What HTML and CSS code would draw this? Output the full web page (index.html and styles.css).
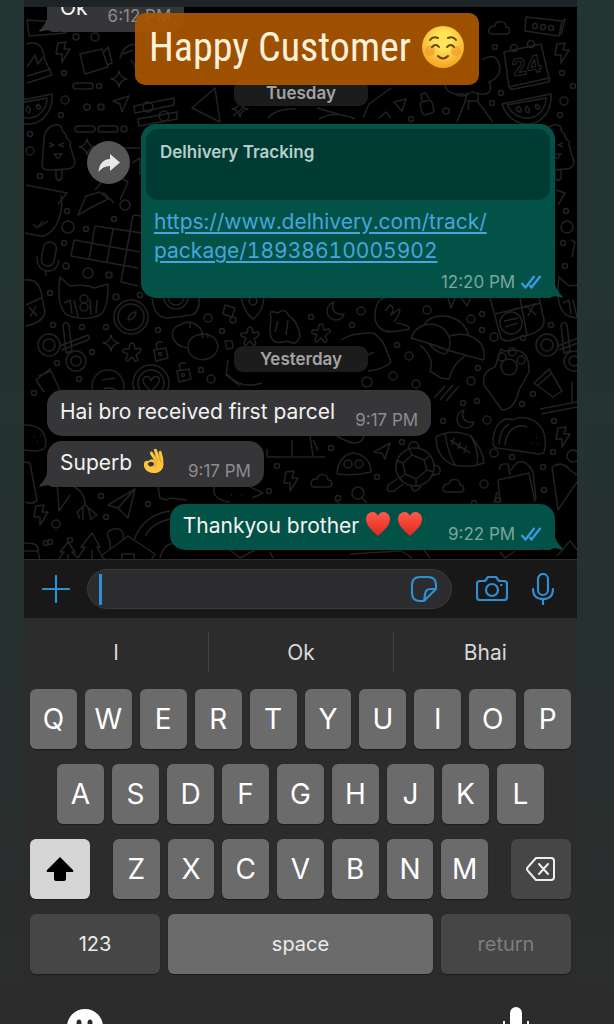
FILE: index.html
```html
<!DOCTYPE html>
<html lang="en">

<head>
    <meta charset="UTF-8">
    <meta name="viewport" content="width=device-width, initial-scale=1.0">
    <title>Happy Customer</title>
    <link rel="stylesheet" href="styles.css">
</head>

<body>
    <!-- shared icons -->
    <svg class="defs" aria-hidden="true">
        <symbol id="ticks" viewBox="0 0 22 16">
            <path d="M1.5 9 L5.5 13.5 L14.5 2 M9.5 11 L11.5 13.5 L20.5 2" fill="none" stroke="#3c9be0" stroke-width="2.2" />
        </symbol>
        <symbol id="heart" viewBox="0 0 26 26">
            <path d="M13 25 C8 20 1 15 1 8 C1 4 4 1 7.500 1 C10 1 12 2.500 13 5 C14 2.500 16 1 18.500 1 C22 1 25 4 25 8 C25 15 18 20 13 25 Z" fill="url(#heartFill)" />
        </symbol>
        <symbol id="tail-in" viewBox="0 0 20 20">
            <path d="M8 0 V7 Q6 13 0 19 Q1 20 4 19 Q10 17 13 20 H20 V0 Z" fill="#363638" />
        </symbol>
        <symbol id="tail-out" viewBox="0 0 20 20">
            <path d="M12 0 V7 Q14 13 20 19 Q19 20 16 19 Q10 17 7 20 H0 V0 Z" fill="#035247" />
        </symbol>
        <linearGradient id="heartFill" x1="0" y1="0" x2="0" y2="1">
            <stop offset="0" stop-color="#ff5a4a" />
            <stop offset="1" stop-color="#e3261d" />
        </linearGradient>
        <radialGradient id="smileFill" cx="0.5" cy="0.35" r="0.65">
            <stop offset="0.3" stop-color="#ffe35a" />
            <stop offset="1" stop-color="#f5a31c" />
        </radialGradient>

        <!-- wallpaper doodles -->
        <g id="bolt"><path d="M-5 -9 L3 -10 L1 -3 L7 -3 L-1 10 L-1 2 L-7 2 Z" /></g>
        <g id="star"><path d="M0 -8 Q1 -1 8 0 Q1 1 0 8 Q-1 1 -8 0 Q-1 -1 0 -8 Z" /></g>
        <g id="plane"><path d="M-8 -3 L8 -8 L1 8 L-1 0 Z" /></g>
        <g id="cloud"><path d="M-7 6 H7 C12 6 12 -1 7 -1 C7 -8 -3 -8 -4 -2 C-11 -3 -12 6 -7 6 Z" /></g>
        <g id="moon"><path d="M-1 -9 C-12 -5 -9 9 1 9 C6 9 8 6 9 3 C1 5 -5 -1 -1 -9 Z" /></g>
        <g id="flower"><path d="M-2 -9 Q0 -11 2 -9 L3 -4 L8 -5 Q10 -3 8 -1 L4 2 L6 7 Q5 9 3 8 L0 4 L-4 8 Q-6 8 -6 6 L-4 1 L-9 -1 Q-10 -4 -7 -4 L-3 -4 Z" /></g>
        <g id="lock"><path d="M-6 -2 L6 -4 L8 6 L-4 9 Z M-3 -3 L-4 -8 Q-1 -12 3 -9" /><circle cy="2" r="1.500" /></g>
        <g id="melon"><path d="M-25 -3 L24 -13 C25 4 15 16 2 17 C-11 18 -21 9 -25 -3 Z M-20 -2 L19 -9 C19 2 11 10 2 11 C-8 12 -16 6 -20 -2 Z M-10 0 q5 -1 4 5 q-6 0 -4 -5 M0 -1 q4 4 1 7 q-5 -3 -1 -7 M9 -3 q5 3 3 5 q-5 0 -3 -5" /></g>
        <g id="popsicle"><path d="M-16 15 L-14 -12 C-12 -26 2 -28 4 -22 C3 -17 9 -18 8 -13 C10 -9 14 -10 12 -5 L17 12 Q16 19 9 19 L-9 20 Q-16 20 -16 15 Z M-2 20 V28 Q1 33 4 28 V19 M-9 -7 L-4 -5 L-9 -3 M6 -7 L1 -5 L6 -3 M-5 4 H5 M-3 4 Q0 13 3 4" /></g>
        <g id="cal"><path d="M-22 -14 L15 -22 L23 12 L-17 21 Z M-17 21 Q-15 24 -12 23 L22 16 Q25 15 23 12" /><circle cx="-12" cy="-18" r="3.500" /><circle cx="5" cy="-22" r="3.500" /></g>
        <g id="cat"><path d="M-24 -23 L-14 -14 Q2 -16 10 -12 L24 -16 Q24 10 16 15 Q0 22 -17 15 Q-28 6 -24 -23 Z M-20 3 L-14 0 L-12 14 M-10 0 L-6 17 M6 -1 L7 15 M13 0 L12 14" /><circle cy="-1" r="4" /><circle cy="7" r="4" /></g>
        <g id="guitar"><circle cx="-14" cy="0" r="6" /><circle cx="-14" cy="0" r="11" /><circle cx="13" cy="16" r="5" /><circle cx="13" cy="16" r="10" /><path d="M-3 1 L25 -10 Q28 -8 25 -5 L-2 5 M0 -20 Q3 -25 6 -20 L9 6 L3 8 Z" /></g>
        <g id="mic"><rect x="-7" y="-14" width="13" height="24" rx="6" transform="rotate(10)" /><path d="M-12 0 Q-12 14 -2 15 Q8 16 10 4 M-3 15 V20" /></g>
        <g id="dots"><circle r="4" /><circle cx="14" cy="16" r="2.500" /><circle cx="-10" cy="19" r="2.500" /></g>
        <g id="trees"><path d="M-22 16 L-16 8 H-20 L-12 -2 L-5 8 H-8 L-2 14 M-2 14 L5 3 H1 L12 -11 L20 3 H17 L23 14 M-12 10 V18 M12 6 V18" /></g>
        <g id="taco"><path d="M-26 8 C-26 -12 -14 -19 -6 -15 C0 -20 14 -17 20 -10 C26 -5 28 8 25 17 Q24 19 20 19 L-22 13 Q-26 12 -26 8 Z M-14 10 C-13 -5 -2 -12 8 -8 M-20 9 C-19 -4 -14 -9 -10 -11 M17 3 h1 M12 8 h1 M18 9 h1" /></g>
    </svg>

    <header class="topbar"></header>

    <main class="chat">
        <svg class="wallpaper" viewBox="24 7 553 552" preserveAspectRatio="xMidYMin slice" aria-hidden="true">
            <!-- upper left -->
            <path d="M27 20 L60 22 L66 33 L29 36 Z M26 44 Q40 40 43 52 L45 60 L52 75 L27 83 M27 67 L35 55 L38 64 L43 57 M27 76 L51 69" />
            <use href="#bolt" x="63" y="52" />
            <path d="M80 54 L102 49 L108 67 L85 74 Z M104 52 L108 47 L112 63 L107 65" />
            <use href="#star" x="119" y="79" />
            <rect x="73" y="83" width="20" height="6" rx="3" />
            <use href="#plane" x="121" y="104" />
            <path d="M134 106 L174 98 V105 L135 113 Z M138 119 L177 112 V119 L139 126 Z" />
            <circle cx="148" cy="107" r="5" /><circle cx="164" cy="116" r="5" />
            <use href="#melon" x="28" y="107" />
            <rect x="75" y="126" width="20" height="6" rx="3" />
            <rect x="98" y="126" width="20" height="6" rx="3" />
            <use href="#popsicle" x="58" y="150" />
            <use href="#star" x="87" y="147" />
            <circle cx="95" cy="37" r="4" /><circle cx="65" cy="100" r="4" /><circle cx="61" cy="115" r="2.500" />
            <circle cx="76" cy="37" r="3" /><circle cx="99" cy="86" r="2.500" /><circle cx="87" cy="107" r="3" /><circle cx="101" cy="107" r="3" /><circle cx="124" cy="129" r="3" /><circle cx="64" cy="73" r="2.500" /><circle cx="30" cy="134" r="2.500" /><circle cx="30" cy="151" r="4" /><circle cx="40" cy="176" r="2.500" />
            <path d="M108 148 H140 M132 163 L140 158 V175 M95 190 L110 172 L128 182 L120 200 M26 185 L67 193 L58 204 M61 195 C65 220 50 238 40 236 L25 233 M33 224 L37 228 L43 221 M39 227 L48 221" />
            <path d="M78 215 L86 196 L100 192 L108 199 L90 208 Z M78 215 L90 208 M103 192 L114 203" />
            <circle cx="125" cy="205" r="5" /><circle cx="68" cy="227" r="6" /><circle cx="67" cy="211" r="2.500" /><circle cx="86" cy="229" r="2.500" /><circle cx="64" cy="243" r="2.500" /><circle cx="114" cy="219" r="2.500" />
            <!-- crossword -->
            <path d="M95 226 L142 233 M74 240 L140 252 M71 256 L138 268 M74 240 L71 256 M95 226 L89 259 M113 229 L107 262 M133 215 L121 282 L138 286 M134 215 L142 216" />
            <use href="#mic" x="49" y="256" />
            <use href="#cat" x="84" y="300" />
            <circle cx="131" cy="317" r="17" /><circle cx="131" cy="317" r="13" />
            <path d="M128 320 Q129 312 136 312 Q136 319 128 320 M24 280 Q38 278 41 292 L45 312 Q43 323 25 326 M26 305 L41 298 M29 307 L37 316 M36 306 L30 317" />
            <circle cx="88" cy="273" r="5" /><circle cx="109" cy="275" r="3" /><circle cx="66" cy="266" r="3" /><circle cx="50" cy="293" r="2.500" /><circle cx="116" cy="297" r="3" /><circle cx="140" cy="295" r="2.500" />
            <use href="#guitar" x="63" y="345" />
            <use href="#star" x="111" y="343" /><use href="#flower" x="132" y="353" /><use href="#lock" x="160" y="352" />
            <path d="M152 298 Q154 318 168 318 L192 315 Q200 312 199 298" /><circle cx="176" cy="297" r="12" /><circle cx="176" cy="297" r="8" />
            <path d="M187 348 C170 345 168 328 180 325 Q190 318 200 328 L203 334 M188 347 C187 332 215 328 218 346 C216 365 188 363 188 347 M201 333 L203 338 M207 333 L208 338 M190 323 V328" />
            <circle cx="151" cy="383" r="18" /><circle cx="151" cy="383" r="13" /><path d="M151 391 Q139 381 145 377 Q150 375 151 381 Q154 374 159 378 Q161 383 151 391" />
            <circle cx="108" cy="386" r="16" /><path d="M102 380 L115 378 M104 389 Q110 386 118 391 M36 380 L50 369 L60 390 M36 380 L44 392 M39 376 L51 371" />
            <use href="#lock" x="183" y="373" />
            <circle cx="53" cy="325" r="2.500" /><circle cx="106" cy="327" r="2.500" /><circle cx="158" cy="330" r="2.500" /><circle cx="82" cy="327" r="2.500" /><circle cx="92" cy="352" r="2.500" /><circle cx="57" cy="363" r="2.500" /><circle cx="79" cy="379" r="2.500" /><circle cx="201" cy="370" r="2.500" /><circle cx="211" cy="379" r="4" /><circle cx="208" cy="318" r="4" /><circle cx="222" cy="331" r="2.500" /><circle cx="34" cy="393" r="2.500" />
            <!-- centre -->
            <path d="M225 305 L235 308 L232 317 L223 314 Z M225 341 L232 341 L233 348 L227 349 Z M241 297 Q244 312 253 319 Q263 312 264 297" /><circle cx="253" cy="301" r="4" /><circle cx="233" cy="320" r="3" />
            <use href="#flower" x="250" y="337" />
            <path d="M271 317 Q268 309 278 313 Q285 307 289 316 Q297 320 300 335 Q298 347 287 341 Q270 347 270 330 Z M278 321 L275 332 M288 320 L286 335 M228 360 L226 375 L240 386 M227 374 Q240 390 262 383" />
            <use href="#moon" x="335" y="311" /><use href="#flower" x="321" y="334" />
            <path d="M341 340 Q352 332 374 333 L383 342 L391 362 Q385 369 368 371 M365 356 L374 352" />
            <path d="M385 298 Q374 300 375 320 Q380 335 398 331 L409 329 Q410 325 396 323 M385 311 L390 305 Q396 308 391 315 L399 309 Q402 311 394 322" />
            <path d="M450 351 Q430 343 411 338 Q416 324 433 324 Q449 328 450 342 Q450 350 446 353 M424 325 Q430 315 444 316 Q464 318 469 336 M450 336 Q470 330 482 345 Q486 358 483 360 L447 350 M420 345 Q435 358 430 371 L441 378 L449 379 Q452 365 466 355 M429 344 Q438 354 446 354" />
            <path d="M490 298 L501 338 Q505 344 520 337 Q545 332 544 320 L539 298 M520 298 L527 335 M495 314 L541 303 M525 305 L536 315 M535 303 L528 316" /><circle cx="511" cy="323" r="11" /><path d="M504 321 L518 318 M505 327 L518 323 M448 298 L451 308 L455 298 M461 297 L467 306 L471 297" />
            <path d="M484 385 Q481 372 495 367 L501 349 Q505 353 513 350 Q530 350 529 372 L519 390 Q515 410 502 410 L484 385" /><circle cx="509" cy="367" r="8" /><circle cx="502" cy="357" r="4" /><circle cx="512" cy="352" r="4" /><circle cx="521" cy="360" r="4" />
            <path d="M534 383 L549 369 L562 391 L553 397 Z M537 386 L551 374 M434 398 L445 386 M440 400 L453 385 M446 401 L459 386" />
            <use href="#guitar" x="561" y="345" />
            <use href="#cat" x="583" y="300" />
            <circle cx="361" cy="311" r="4" /><circle cx="352" cy="325" r="2.500" /><circle cx="311" cy="317" r="2.500" /><circle cx="427" cy="310" r="4" /><circle cx="471" cy="319" r="4" /><circle cx="482" cy="314" r="2.500" /><circle cx="482" cy="330" r="2.500" /><circle cx="494" cy="337" r="4" /><circle cx="523" cy="338" r="2.500" /><circle cx="551" cy="325" r="2.500" /><circle cx="409" cy="356" r="4" /><circle cx="397" cy="345" r="2.500" /><circle cx="478" cy="368" r="2.500" /><circle cx="471" cy="381" r="4" /><circle cx="393" cy="376" r="4" /><circle cx="367" cy="382" r="5" /><circle cx="416" cy="384" r="4" /><circle cx="533" cy="394" r="2.500" />
            <!-- upper right -->
            <path d="M157 28 L175 20 M145 45 Q160 30 175 48 M120 58 Q125 42 137 45 M123 54 L133 50 M131 60 Q137 66 136 78 M188 20 Q192 34 205 30 Q215 22 212 18 M235 98 L243 108 L233 116 M192 108 L215 88 L220 122 Z M268 118 Q276 108 296 109" />
            <path d="M320 15 Q328 30 342 22 M350 18 L358 26 M137 70 H175 M138 76 H176" />
            <use href="#star" x="240" y="109" /><use href="#cloud" x="499" y="28" />
            <path d="M526 17 L562 21 L559 36 L525 31 Z M562 21 L565 19 L561 35" /><circle cx="535" cy="26" r="2.500" /><circle cx="543" cy="27" r="2.500" /><circle cx="551" cy="28" r="2.500" />
            <use href="#cal" x="526" y="66" /><text class="day" x="512" y="74" transform="rotate(-10 526 66)">24</text>
            <use href="#bolt" x="562" y="53" />
            <path d="M482 60 Q497 50 500 68 Q500 78 489 82 Q495 95 480 94 L472 92 Q462 99 455 94 M445 85 Q446 95 465 94 M467 92 L465 102 L457 122 M478 93 V102 L493 122 M467 101 H478 M469 101 L468 110 M394 102 L406 99 L402 111 Z" />
            <rect x="421" y="101" width="12" height="13" rx="3" transform="rotate(-15 427 107)" /><path d="M422 101 L421 94 L426 93 L429 99" />
            <use href="#melon" x="527" y="107" /><use href="#popsicle" x="557" y="150" />
            <path d="M363 118 L369 104 L391 88 M379 118 L386 112 L391 118 M317 108 L345 116 M319 119 Q335 110 355 119 M556 190 L565 193 L558 205 M571 240 L575 242 L572 257" />
            <circle cx="495" cy="47" r="2.500" /><circle cx="562" cy="73" r="2.500" /><circle cx="573" cy="86" r="2.500" /><circle cx="501" cy="93" r="2.500" /><circle cx="492" cy="103" r="2.500" /><circle cx="564" cy="101" r="4" /><circle cx="560" cy="115" r="2.500" /><circle cx="446" cy="111" r="3" /><circle cx="411" cy="119" r="2.500" /><circle cx="566" cy="211" r="2.500" /><circle cx="567" cy="227" r="6" /><circle cx="563" cy="243" r="2.500" /><circle cx="565" cy="266" r="2.500" />
            <!-- bottom -->
            <use href="#moon" x="465" y="419" /><use href="#taco" x="519" y="435" /><use href="#bolt" x="563" y="437" />
            <path d="M436 437 Q452 428 471 436 Q484 452 484 463 Q468 469 451 464 Q436 456 436 437 M445 433 Q448 455 456 466 M470 435 Q480 450 477 465 M450 440 L470 453 M454 438 L452 445 M460 442 L458 449 M466 446 L464 453 M374 452 L390 443 L385 459 L382 453 Z" />
            <circle cx="415" cy="467" r="19" /><path d="M403 463 L412 455 L424 460 L427 470 L416 479 L405 474 Z M412 455 L409 449 M424 460 L431 455 M427 470 L434 472 M416 479 V486 M405 474 L399 479 M403 463 L396 460 M408 449 Q410 439 417 443 L420 449 M397 479 L388 485 Q385 493 394 491 L403 484 M433 465 Q443 466 439 474 L433 475 M411 486 Q414 496 421 486" />
            <path d="M337 474 Q338 456 353 453 Q370 455 371 472 Q355 476 337 474" /><circle cx="348" cy="464" r="4" /><circle cx="359" cy="464" r="4" />
            <use href="#cloud" x="321" y="481" /><use href="#cloud" x="453" y="486" />
            <path d="M498 480 L500 502 M498 480 L529 473 L535 502 M500 470 Q498 463 508 464 L510 475 M511 470 Q520 455 530 467 L533 472 L536 500 M552 467 Q562 460 570 470 L577 475 M552 467 L558 510 L577 482 M497 492 L494 503" />
            <path d="M540 409 L577 402 M541 414 L577 407 M572 382 V402" />
            <path d="M24 425 Q45 424 46 443 Q47 450 36 451 L24 450 M34 437 h1 M40 435 h1 M37 442 h1 M24 462 L30 463 L37 500 Q34 505 25 502" />
            <use href="#bolt" x="41" y="515" />
            <path d="M57 480 L59 511 L70 495 M64 484 Q85 487 85 505 L97 515 L90 520 M85 505 L77 512 L80 519 M83 508 V520 M88 508 L91 519 M108 505 L135 489 L128 518 L118 508 Z M118 508 L134 490 M158 487 L160 498 L167 500 L170 498 L187 500 M214 487 Q212 500 230 502 M231 495 h1 M241 495 h1 M250 487 L263 493 L252 498" />
            <use href="#trees" x="80" y="544" />
            <path d="M101 556 L128 536 L155 554 L151 560 M110 549 V541 Q104 532 113 529 Q125 527 123 539 M101 556 L106 560 M134 540 Q143 515 170 511 M145 536 Q152 523 170 519 M122 560 V554 H134 V560 M24 543 Q40 542 38 552 L40 560 M24 551 H38 M160 558 Q165 538 182 546" />
            <path d="M230 550 L240 558 L255 550 M270 552 L273 558 M350 554 L400 551 M400 550 L412 558 M424 550 L430 558 M500 552 L505 558 L515 551 M557 556 L570 541 L577 550 M335 500 L352 514" /><circle cx="358" cy="493" r="6" /><path d="M362 498 L367 503 M266 457 H325 M267 449 V456 M292 440 V456 M310 436 L313 456 M313 440 L318 450 M337 436 Q360 450 364 436" />
            <use href="#bolt" x="291" y="481" /><use href="#dots" x="56" y="524" /><use href="#dots" x="484" y="484" /><circle cx="494" cy="453" r="4" />
            <circle cx="443" cy="421" r="2.500" /><circle cx="487" cy="420" r="4" /><circle cx="463" cy="403" r="2.500" /><circle cx="477" cy="401" r="2.500" /><circle cx="522" cy="404" r="2.500" /><circle cx="554" cy="421" r="2.500" /><circle cx="553" cy="452" r="2.500" /><circle cx="573" cy="456" r="6" /><circle cx="512" cy="457" r="2.500" /><circle cx="543" cy="467" r="2.500" /><circle cx="544" cy="490" r="2.500" /><circle cx="377" cy="477" r="2.500" /><circle cx="402" cy="442" r="2.500" /><circle cx="331" cy="448" r="2.500" /><circle cx="338" cy="498" r="2.500" /><circle cx="277" cy="466" r="2.500" /><circle cx="148" cy="504" r="2.500" /><circle cx="106" cy="517" r="2.500" /><circle cx="101" cy="496" r="2.500" /><circle cx="50" cy="542" r="2.500" /><circle cx="269" cy="491" r="2.500" />
        </svg>

        <div class="row in first">
            <div class="bubble">
                <svg class="tail"><use href="#tail-in" /></svg>
                <p>Ok</p>
                <time>6:12 PM</time>
            </div>
        </div>

        <div class="date">Tuesday</div>

        <div class="row out">
            <button class="forward" aria-label="Forward">
                <svg viewBox="0 0 24 24"><path d="M13 3 L23 11.500 L13 20 V15 C8 15 4.500 17 1.500 21 C2 13 6 8.500 13 8 Z" fill="#e6e6e6" /></svg>
            </button>
            <div class="bubble link-bubble">
                <svg class="tail"><use href="#tail-out" /></svg>
                <div class="preview">Delhivery Tracking</div>
                <a href="https://www.delhivery.com/track/package/18938610005902">https://www.delhivery.com/track/<wbr>package/18938610005902</a>
                <time>12:20 PM <svg class="ticks"><use href="#ticks" /></svg></time>
            </div>
        </div>

        <div class="date">Yesterday</div>

        <div class="row in">
            <div class="bubble">
                <p>Hai bro received first parcel</p>
                <time>9:17 PM</time>
            </div>
        </div>
        <div class="row in">
            <div class="bubble">
                <svg class="tail"><use href="#tail-in" /></svg>
                <p>Superb
                    <svg class="emoji hand" viewBox="0 0 26 28" role="img" aria-label="OK hand">
                        <path d="M6 14 C3 13 1 15 1 18 C1 23 6 27 12 27 C19 27 23 22 22 15 C22 11 21 8 20 4 C19 2 17 3 17 5 L18 10 L15 2 C14 0 11 1 12 3 L14 10 L10 4 C8 3 7 5 8 7 L12 13 C9 11 8 13 6 14 Z" fill="#fbc63c" />
                        <path d="M5 17 C7 14 11 14 12 17 C12 20 7 22 5 17 Z" fill="#363638" />
                        <path d="M12 13 C15 14 15 19 12 21 M14 10 L16 14 M18 10 L19 15" fill="none" stroke="#d98f1e" stroke-width="1" />
                    </svg>
                </p>
                <time>9:17 PM</time>
            </div>
        </div>
        <div class="row out last">
            <div class="bubble">
                <svg class="tail"><use href="#tail-out" /></svg>
                <p>Thankyou brother
                    <svg class="emoji" role="img" aria-label="red heart"><use href="#heart" /></svg>
                    <svg class="emoji" role="img" aria-label="red heart"><use href="#heart" /></svg>
                </p>
                <time>9:22 PM <svg class="ticks"><use href="#ticks" /></svg></time>
            </div>
        </div>
    </main>

    <!-- story caption -->
    <h1 class="banner">
        Happy Customer
        <svg viewBox="0 0 44 44" role="img" aria-label="smiling face">
            <circle cx="22" cy="22" r="21" fill="url(#smileFill)" />
            <circle cx="9" cy="26" r="5" fill="#f58a2a" opacity="0.5" />
            <circle cx="35" cy="26" r="5" fill="#f58a2a" opacity="0.5" />
            <path d="M9 15 Q12 11 17 13 M27 13 Q32 11 35 15 M11 22 Q15 18 18 22 M26 22 Q30 18 33 22 M17 31 Q22 36 27 31" fill="none" stroke="#6b4209" stroke-width="2" stroke-linecap="round" />
        </svg>
    </h1>

    <form class="composer">
        <button type="button" class="icon" aria-label="Attach">
            <svg viewBox="0 0 28 28"><path d="M14 1 V27 M1 14 H27" /></svg>
        </button>
        <div class="field">
            <span class="caret"></span>
            <input type="text" aria-label="Message">
            <button type="button" class="icon" aria-label="Stickers">
                <svg viewBox="0 0 28 28"><path d="M10 2 H18 Q26 2 26 10 V14 L14 26 H10 Q2 26 2 18 V10 Q2 2 10 2 Z M26 14 H21 Q15 14 15 20 L14 26" /></svg>
            </button>
        </div>
        <button type="button" class="icon camera" aria-label="Camera">
            <svg viewBox="0 0 32 28"><path d="M4 6 H9 L12 2 H20 L23 6 H28 Q31 6 31 9 V22 Q31 25 28 25 H4 Q1 25 1 22 V9 Q1 6 4 6 Z" /><circle cx="16" cy="15" r="6" /><path d="M25 10 H25.500" /></svg>
        </button>
        <button type="button" class="icon voice" aria-label="Voice message">
            <svg viewBox="0 0 22 32"><rect x="6" y="1" width="10" height="21" rx="5" /><path d="M1 16 Q1 26 11 26 Q21 26 21 16 M11 26 V31" /></svg>
        </button>
    </form>

    <section class="keyboard">
        <div class="suggestions">
            <button>I</button>
            <button>Ok</button>
            <button>Bhai</button>
        </div>
        <div class="keys">
            <button>Q</button><button>W</button><button>E</button><button>R</button><button>T</button><button>Y</button><button>U</button><button>I</button><button>O</button><button>P</button>
        </div>
        <div class="keys inset">
            <button>A</button><button>S</button><button>D</button><button>F</button><button>G</button><button>H</button><button>J</button><button>K</button><button>L</button>
        </div>
        <div class="keys third">
            <button class="shift" aria-label="Shift">
                <svg viewBox="0 0 30 26"><path d="M15 1 L28 14 Q29 16 27 16 H21 V23 Q21 25 19 25 H11 Q9 25 9 23 V16 H3 Q1 16 2 14 Z" fill="#000" /></svg>
            </button>
            <div class="letters">
                <button>Z</button><button>X</button><button>C</button><button>V</button><button>B</button><button>N</button><button>M</button>
            </div>
            <button class="dark" aria-label="Delete">
                <svg viewBox="0 0 30 26"><path d="M10 2 H25 Q28 2 28 5 V21 Q28 24 25 24 H10 L2 15 Q0 13 2 11 Z M13 8 L22 18 M22 8 L13 18" fill="none" stroke="#eee" stroke-width="2" stroke-linecap="round" stroke-linejoin="round" /></svg>
            </button>
        </div>
        <div class="keys bottom">
            <button class="dark">123</button>
            <button>space</button>
            <button class="dark return">return</button>
        </div>
        <div class="tools">
            <button aria-label="Emoji">
                <svg viewBox="0 0 36 36"><circle cx="18" cy="18" r="18" fill="#fff" /><ellipse cx="12" cy="14" rx="2.500" ry="3.500" fill="#2c2c2c" /><ellipse cx="23" cy="14" rx="2.500" ry="3.500" fill="#2c2c2c" /><path d="M8 21 Q18 34 28 21" fill="none" stroke="#2c2c2c" stroke-width="2" /></svg>
            </button>
            <button aria-label="Dictate">
                <svg viewBox="0 0 36 36"><rect x="12" y="-2" width="12" height="26" rx="6" fill="#fff" /><path d="M6 12 V17 Q6 28 18 28 Q30 28 30 17 V12 M18 28 V34" fill="none" stroke="#fff" stroke-width="2" /></svg>
            </button>
        </div>
    </section>
</body>

</html>
```
FILE: styles.css
```css
* {
    box-sizing: border-box;
}

body {
    position: relative;
    display: flex;
    flex-direction: column;
    height: 100vh;
    margin: 0;
    padding: 0 37px 0 24px;
    overflow: hidden;
    background: linear-gradient(#223532, #25312f 60%, #2b2d2d 88%, #2c2c2c);
    font-family: Inter, "Liberation Sans", sans-serif;
    color: #f2f2f2;
}

button {
    margin: 0;
    padding: 0;
    border: none;
    background: none;
    color: inherit;
    font: inherit;
    cursor: pointer;
}

.defs {
    position: absolute;
    width: 0;
    height: 0;
}

.topbar {
    flex: none;
    height: 7px;
    background: #1e2425;
}

/* chat */
.chat {
    position: relative;
    flex: none;
    padding: 0 22px 9px 23px;
    overflow: hidden;
    background: #000;
}

.wallpaper {
    position: absolute;
    top: 0;
    left: 0;
    width: 100%;
    height: 100%;
    fill: none;
    stroke: #232222;
    stroke-width: 1.5;
    stroke-linejoin: round;
}

.day {
    font-size: 23px;
    font-weight: 700;
    stroke-width: 1.2;
}

.row {
    position: relative;
    display: flex;
    margin-bottom: 5px;
}

.row.first {
    margin-top: -21px;
}

.row.out {
    justify-content: flex-end;
    align-items: flex-start;
}

.row.last {
    margin: 17px 0 0;
}

.bubble {
    position: relative;
    display: flex;
    align-items: flex-end;
    gap: 20px;
    height: 46px;
    padding: 0 13px;
    border-radius: 15px;
    background: #363638;
    font-size: 21px;
    line-height: 44px;
}

.out .bubble {
    background: #035247;
}

.last .bubble {
    gap: 25px;
}

.bubble p {
    margin: 0;
    height: 46px;
    white-space: nowrap;
}

.tail {
    position: absolute;
    bottom: 0;
    left: -8px;
    width: 20px;
    height: 20px;
}

.out .tail {
    left: auto;
    right: -8px;
}

.bubble time {
    position: relative;
    height: 26px;
    color: #8c8c90;
    font-size: 17px;
    line-height: 20px;
    white-space: nowrap;
}

.out time {
    color: #7ba59d;
}

.emoji {
    width: 26px;
    height: 26px;
    vertical-align: -4px;
}

.hand {
    margin-left: 4px;
}

.ticks {
    width: 22px;
    height: 16px;
    vertical-align: -2px;
}

.date {
    position: relative;
    width: 134px;
    margin: 48px auto 18px;
    border-radius: 9px;
    background: #1c1c1d;
    color: #a3a3a3;
    font-size: 17px;
    font-weight: 600;
    line-height: 26px;
    text-align: center;
}

.forward {
    display: flex;
    justify-content: center;
    align-items: center;
    width: 43px;
    height: 43px;
    margin: 17px 11px 0 0;
    border-radius: 50%;
    background: #555;
}

.forward svg {
    width: 24px;
    height: 24px;
}

.link-bubble {
    flex-direction: column;
    align-items: stretch;
    gap: 0;
    width: 414px;
    height: 174px;
    padding: 5px;
}

.preview {
    height: 71px;
    padding: 9px 14px;
    border-radius: 12px;
    background: #003b33;
    color: #b4cfca;
    font-size: 17px;
    font-weight: 600;
    line-height: 28px;
}

.link-bubble a {
    padding: 7px 8px 0;
    color: #46a5dd;
    font-variant-numeric: tabular-nums;
    line-height: 29px;
    text-underline-offset: 3px;
}

.link-bubble time {
    height: auto;
    margin: 7px 8px 0 0;
    text-align: right;
}

/* caption over the chat */
.banner {
    position: absolute;
    top: 13px;
    left: 22%;
    right: 22%;
    display: flex;
    justify-content: center;
    align-items: center;
    gap: 10px;
    height: 72px;
    margin: 0;
    padding-bottom: 4px;
    border-radius: 10px;
    background: rgba(170, 88, 0, 0.92);
    color: #fff0dc;
    font-family: "Roboto Condensed", "Open Sans Condensed", Roboto, sans-serif;
    font-size: 40px;
    font-weight: 400;
    white-space: nowrap;
}

.banner svg {
    flex: none;
    width: 44px;
    height: 44px;
}

/* composer */
.composer {
    display: flex;
    flex: none;
    align-items: center;
    height: 59px;
    padding: 0 23px 0 18px;
    border-top: 1px solid #2b2b2b;
    background: #181818;
}

.icon svg {
    display: block;
    width: 28px;
    height: 28px;
    fill: none;
    stroke: #2f8fcf;
    stroke-width: 2.2;
    stroke-linecap: round;
    stroke-linejoin: round;
}

.field {
    display: flex;
    flex: 1;
    align-items: center;
    min-width: 0;
    height: 40px;
    margin: 0 24px 0 17px;
    padding: 0 13px 0 11px;
    border: 1px solid #39393b;
    border-radius: 20px;
    background: #2c2c2e;
}

.field input {
    flex: 1;
    min-width: 0;
    border: none;
    outline: none;
    background: none;
    color: #fff;
    font-size: 21px;
}

.caret {
    width: 3px;
    height: 31px;
    background: #2f8fcf;
}

.camera svg {
    width: 32px;
}

.voice {
    margin-left: 24px;
}

.voice svg {
    width: 22px;
    height: 32px;
}

/* keyboard */
.keyboard {
    display: flex;
    flex: 1;
    flex-direction: column;
    min-height: 0;
    gap: 15px;
    background: #2c2c2c;
}

.suggestions {
    display: grid;
    grid-template-columns: 1fr 1fr 1fr;
    flex: none;
    height: 56px;
    padding: 14px 0 2px;
    color: #d8d8d8;
    font-size: 21px;
}

.suggestions button + button {
    border-left: 1px solid #424242;
}

.keys {
    display: flex;
    flex: none;
    gap: 8px;
    height: 60px;
    padding: 0 6px;
}

.keys button {
    flex: 1;
    border-radius: 6px;
    background: #6b6b6b;
    box-shadow: 0 1px 1px #1c1c1c;
    color: #fff;
    font-size: 28px;
}

.keys svg {
    display: block;
    width: 30px;
    height: 26px;
    margin: 0 auto;
}

.keys.inset {
    padding: 0 33px;
}

.keys.third {
    gap: 23px;
}

.third > button {
    flex: 0 0 60px;
}

.letters {
    display: flex;
    flex: 1;
    gap: 8px;
}

.keys .shift {
    background: #d6d6d6;
}

.keys .dark {
    background: #464646;
}

.keys.bottom {
    display: grid;
    grid-template-columns: 130px 1fr 130px;
}

.keys.bottom button {
    color: #ececec;
    font-size: 20px;
}

.keys.bottom .return {
    color: #7d7d7d;
}

.tools {
    display: flex;
    flex: none;
    justify-content: space-between;
    padding: 20px 43px 0;
}

.tools svg {
    display: block;
    width: 36px;
    height: 36px;
    overflow: visible;
}
```
